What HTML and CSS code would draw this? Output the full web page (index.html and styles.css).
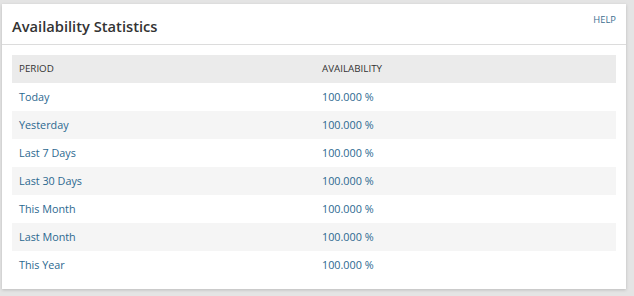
FILE: index.html
```html
<!DOCTYPE html>
<html>
<head>
<meta charset="utf-8">
<link rel="stylesheet" href="styles.css">
</head>
<body>
<div class="card">
  <div class="card-header">
    <h2 class="title">Availability Statistics</h2>
    <a class="help">HELP</a>
  </div>
  <div class="card-body">
    <table class="stats">
      <thead>
        <tr><th>PERIOD</th><th>AVAILABILITY</th></tr>
      </thead>
      <tbody>
        <tr><td>Today</td><td>100.000 %</td></tr>
        <tr><td>Yesterday</td><td>100.000 %</td></tr>
        <tr><td>Last 7 Days</td><td>100.000 %</td></tr>
        <tr><td>Last 30 Days</td><td>100.000 %</td></tr>
        <tr><td>This Month</td><td>100.000 %</td></tr>
        <tr><td>Last Month</td><td>100.000 %</td></tr>
        <tr><td>This Year</td><td>100.000 %</td></tr>
      </tbody>
    </table>
  </div>
</div>
</body>
</html>
```
FILE: styles.css
```css
html, body {
  margin: 0;
  padding: 0;
  background: #e4e4e4;
  font-family: "Open Sans", "Liberation Sans", sans-serif;
}
body {
  padding: 4px 8px 7px 2px;
}
.card {
  width: 624px;
  height: 285px;
  background: #fff;
  box-shadow: 0 1px 3px rgba(0,0,0,0.18);
  box-sizing: border-box;
}
.card-header {
  height: 40px;
  border-bottom: 1px solid #dcdcdc;
  display: flex;
  justify-content: space-between;
  align-items: flex-start;
  padding: 0 10px 0 10px;
}
.title {
  margin: 0;
  padding-top: 12px;
  font-size: 14.7px;
  line-height: 20px;
  font-weight: 600;
  color: #333;
}
.help {
  padding-top: 10px;
  font-size: 9.4px;
  line-height: 12px;
  color: #3d6f8f;
}
.card-body {
  padding: 10px 10px 10px 10px;
}
.stats {
  width: 604px;
  border-collapse: collapse;
  table-layout: fixed;
}
.stats th, .stats td {
  height: 28px;
  padding: 0 7px 1px 7px;
  text-align: left;
  box-sizing: border-box;
}
.stats th {
  background: #ebebeb;
  font-size: 9.8px;
  font-weight: 400;
  color: #333;
}
.stats td {
  font-size: 10.8px;
  color: #2b6890;
}
.stats th:nth-child(2), .stats td:nth-child(2) {
  padding-left: 8px;
}
.stats tbody tr:nth-child(even) td {
  background: #f5f5f5;
}
```
